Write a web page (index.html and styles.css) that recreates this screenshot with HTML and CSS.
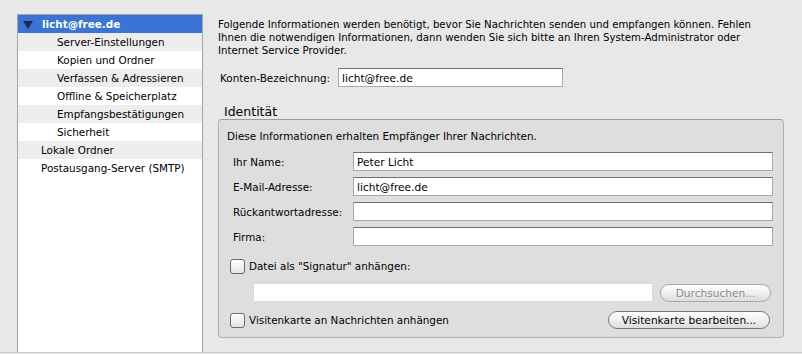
FILE: index.html
```html
<!DOCTYPE html>
<html lang="de">
<head>
  <meta charset="UTF-8">
  <title>Konten-Einstellungen</title>
  <link rel="stylesheet" href="styles.css">
</head>
<body>

<div class="window">
  <ul class="account-tree">
    <li class="selected"><span class="disclosure"></span>licht@free.de</li>
    <li class="sub">Server-Einstellungen</li>
    <li class="sub">Kopien und Ordner</li>
    <li class="sub">Verfassen &amp; Adressieren</li>
    <li class="sub">Offline &amp; Speicherplatz</li>
    <li class="sub">Empfangsbestätigungen</li>
    <li class="sub">Sicherheit</li>
    <li>Lokale Ordner</li>
    <li>Postausgang-Server (SMTP)</li>
  </ul>

  <div class="settings">
    <p class="intro">Folgende Informationen werden benötigt, bevor Sie Nachrichten senden und empfangen können. Fehlen<br>Ihnen die notwendigen Informationen, dann wenden Sie sich bitte an Ihren System-Administrator oder<br>Internet Service Provider.</p>

    <div class="account-name">
      <label for="account">Konten-Bezeichnung:</label>
      <input type="text" id="account" class="field" value="licht@free.de">
    </div>

    <div class="group-title">Identität</div>
    <div class="group">
      <p class="group-desc">Diese Informationen erhalten Empfänger Ihrer Nachrichten.</p>

      <div class="identity">
        <label for="name">Ihr Name:</label>
        <input type="text" id="name" class="field" value="Peter Licht">
        <label for="email">E-Mail-Adresse:</label>
        <input type="text" id="email" class="field" value="licht@free.de">
        <label for="reply">Rückantwortadresse:</label>
        <input type="text" id="reply" class="field">
        <label for="org">Firma:</label>
        <input type="text" id="org" class="field">
      </div>

      <div class="check-row">
        <span class="checkbox"></span>
        <span>Datei als "Signatur" anhängen:</span>
      </div>
      <div class="sig-row">
        <input type="text" class="field sig-field">
        <button class="pill disabled">Durchsuchen...</button>
      </div>
      <div class="check-row vcard-row">
        <span class="checkbox"></span>
        <span class="vcard-label">Visitenkarte an Nachrichten anhängen</span>
        <button class="pill">Visitenkarte bearbeiten...</button>
      </div>
    </div>
  </div>
</div>

</body>
</html>
```

FILE: styles.css
```css
body {
  margin: 0;
  background: #e8e8e8;
  font-family: "DejaVu Sans", Verdana, sans-serif;
  font-size: 10.4px;
  color: #000;
}
.window {
  display: flex;
  height: 352px;
  overflow: hidden;
  border-bottom: 1px solid #cdcdcd;
}
.account-tree {
  list-style: none;
  margin: 14px 0 0 17px;
  padding: 0;
  width: 184px;
  border: 1px solid #a5a5a5;
  border-bottom: none;
  background: #fff;
  flex: none;
}
.account-tree li {
  height: 18px;
  line-height: 18px;
  padding-left: 23px;
  white-space: nowrap;
}
.account-tree li:nth-child(even) {
  background: #ededed;
}
.account-tree li.sub {
  padding-left: 39px;
}
.account-tree li.selected {
  background: #3a74d6;
  color: #fff;
  font-weight: bold;
  padding-left: 4px;
}
.disclosure {
  display: inline-block;
  width: 0;
  height: 0;
  border-left: 5px solid transparent;
  border-right: 5px solid transparent;
  border-top: 8px solid #1d2c4f;
  margin: 0 9px 0 1px;
  vertical-align: -1px;
}
.settings {
  flex: 1;
  padding: 18px 0 0 15px;
}
.intro {
  margin: 0;
  line-height: 13px;
  font-size: 10.2px;
  white-space: nowrap;
}
.field {
  box-sizing: border-box;
  height: 19px;
  border: 1px solid #a9a9a9;
  border-top-color: #6f6f6f;
  background: #fff;
  font-family: inherit;
  font-size: 10.6px;
  padding: 1px 3px 0;
  margin: 0;
  outline: none;
}
.account-name {
  display: flex;
  align-items: center;
  margin-top: 11px;
}
.account-name label {
  padding-left: 2px;
  width: 118px;
}
.account-name .field {
  width: 225px;
}
.group-title {
  font-size: 12.5px;
  line-height: 16px;
  margin: 17px 0 0 6px;
}
.group {
  width: 566px;
  height: 219px;
  box-sizing: border-box;
  margin-top: -1px;
  border: 1px solid #b0b0b0;
  border-top-color: #9c9c9c;
  border-radius: 4px;
  background: #dedede;
  padding: 9px 10px 0 14px;
}
.group-desc {
  margin: 0 0 0 -6px;
  line-height: 14px;
}
.identity {
  display: grid;
  grid-template-columns: 120px 420px;
  row-gap: 6px;
  align-items: center;
  margin-top: 9px;
}
.check-row {
  display: flex;
  align-items: center;
  margin: 12px 0 0 -3px;
  height: 16px;
}
.checkbox {
  box-sizing: border-box;
  width: 15px;
  height: 15px;
  border: 1px solid #6a6a6a;
  border-radius: 3px;
  background: linear-gradient(#ffffff, #e4e4e4);
  margin-right: 4px;
  flex: none;
}
.sig-row {
  display: flex;
  align-items: center;
  margin: 9px 0 0 20px;
}
.sig-field {
  width: 400px;
  border-color: #d8d8d8;
}
.pill {
  box-sizing: border-box;
  height: 18px;
  border: 1px solid #7a7a7a;
  border-radius: 9px;
  background: linear-gradient(#ffffff, #f0f0f0 50%, #dcdcdc);
  font-family: inherit;
  font-size: 10.6px;
  padding: 0 10px;
  color: #000;
}
.pill.disabled {
  width: 111px;
  margin-left: 7px;
  color: #8a8a8a;
  border-color: #a8a8a8;
}
.vcard-row {
  margin-top: 10px;
}
.vcard-label {
  flex: 1;
}
.vcard-row .pill {
  width: 162px;
  margin-right: 3px;
}
```
